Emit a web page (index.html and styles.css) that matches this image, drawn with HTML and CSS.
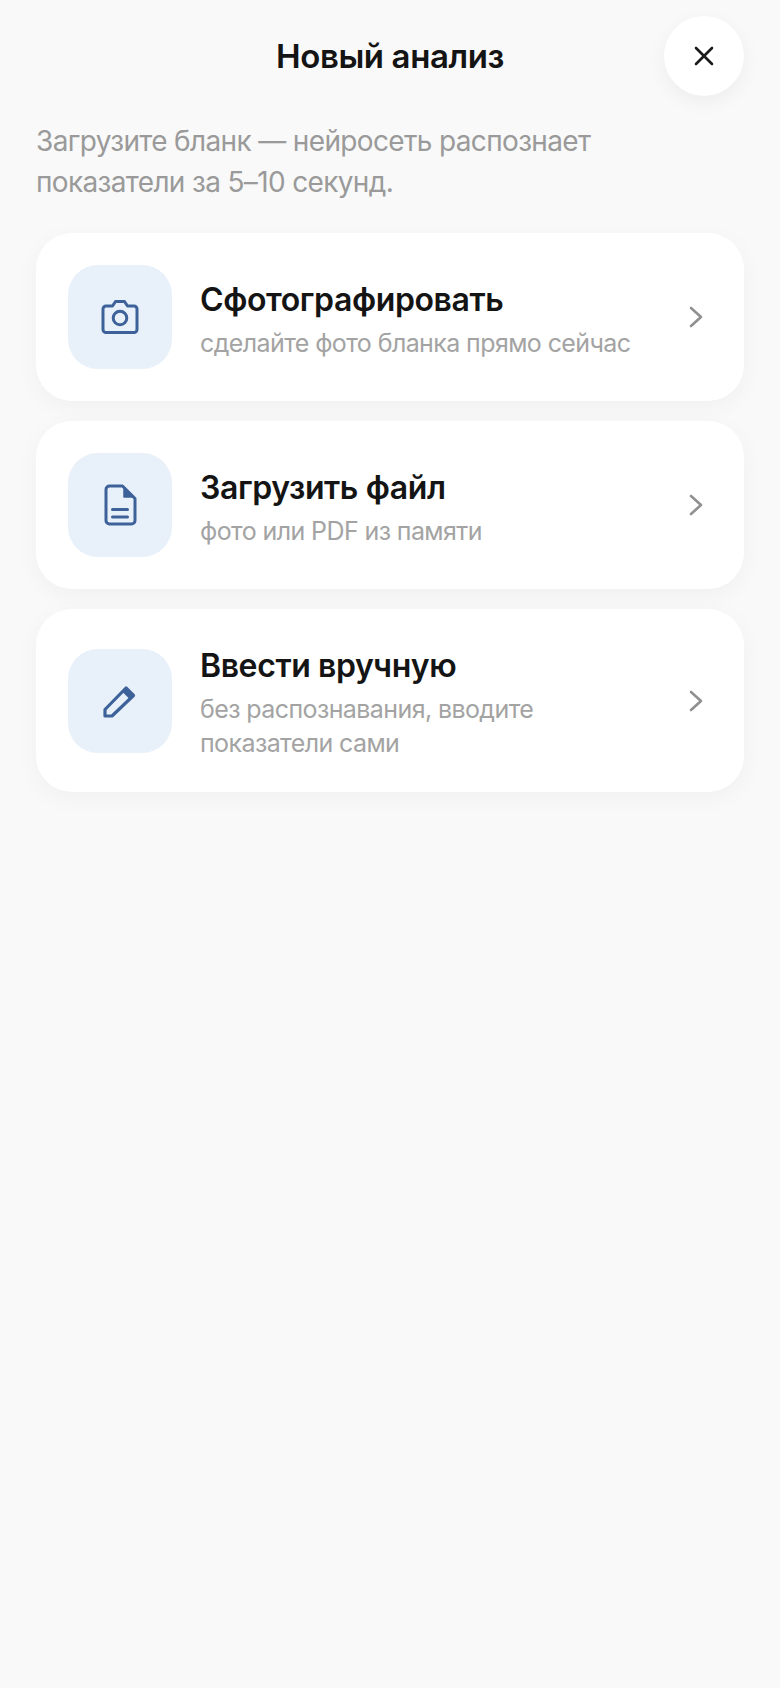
FILE: index.html
```html
<!DOCTYPE html>
<html lang="ru">
<head>
  <meta charset="UTF-8">
  <title>Новый анализ</title>
  <link rel="stylesheet" href="styles.css">
</head>
<body>

  <!-- Header -->
  <header class="top">
    <h1>Новый анализ</h1>
    <button class="close" aria-label="Закрыть">
      <svg width="24" height="24" viewBox="0 0 24 24" fill="none" stroke="#1a1a1a" stroke-width="2.6" stroke-linecap="round">
        <path d="M4 4l16 16M20 4L4 20"/>
      </svg>
    </button>
  </header>

  <p class="intro">Загрузите бланк — нейросеть распознает показатели за 5–10 секунд.</p>

  <!-- Options -->
  <section class="options">
    <div class="card">
      <div class="card-icon">
        <svg width="40" height="40" viewBox="0 0 40 40" fill="none" stroke="#3d6299" stroke-width="3" stroke-linejoin="round">
          <path d="M6 9h6.500l3-4.500h9l3 4.500h6.500a3 3 0 0 1 3 3v20.500a3 3 0 0 1-3 3h-28a3 3 0 0 1-3-3v-20.500a3 3 0 0 1 3-3z"/>
          <circle cx="20" cy="21" r="6.800"/>
        </svg>
      </div>
      <div class="card-text">
        <h3>Сфотографировать</h3>
        <p>сделайте фото бланка прямо сейчас</p>
      </div>
      <svg class="chevron" width="20" height="28" viewBox="0 0 20 28" fill="none" stroke="#909090" stroke-width="2.600" stroke-linecap="round" stroke-linejoin="round">
        <path d="M5 5l10 9-10 9"/>
      </svg>
    </div>

    <div class="card">
      <div class="card-icon">
        <svg width="40" height="42" viewBox="0 0 40 42" fill="none" stroke="#3d6299" stroke-width="3" stroke-linecap="round" stroke-linejoin="round">
          <path d="M9.500 2h13l12.500 12.500v22a3.500 3.500 0 0 1-3.500 3.500h-22a3.500 3.500 0 0 1-3.500-3.500v-31a3.500 3.500 0 0 1 3.500-3.500z"/>
          <path d="M24 3.500v9.500h9.500z" fill="#3d6299" stroke-width="1.500"/>
          <path d="M12.500 25.500h15M12.500 33h15"/>
        </svg>
      </div>
      <div class="card-text">
        <h3>Загрузить файл</h3>
        <p>фото или PDF из памяти</p>
      </div>
      <svg class="chevron" width="20" height="28" viewBox="0 0 20 28" fill="none" stroke="#909090" stroke-width="2.600" stroke-linecap="round" stroke-linejoin="round">
        <path d="M5 5l10 9-10 9"/>
      </svg>
    </div>

    <div class="card">
      <div class="card-icon">
        <svg width="40" height="40" viewBox="0 0 40 40" fill="none" stroke="#3d6299" stroke-width="3.200" stroke-linejoin="round">
          <path d="M5 35v-6.500L26 7l7.500 7.500L12 35z"/>
          <path d="M24.500 9.500l7.500 7.500" stroke-width="5"/>
        </svg>
      </div>
      <div class="card-text">
        <h3>Ввести вручную</h3>
        <p>без распознавания, вводите показатели сами</p>
      </div>
      <svg class="chevron" width="20" height="28" viewBox="0 0 20 28" fill="none" stroke="#909090" stroke-width="2.600" stroke-linecap="round" stroke-linejoin="round">
        <path d="M5 5l10 9-10 9"/>
      </svg>
    </div>
  </section>

</body>
</html>
```

FILE: styles.css
```css
* {
  margin: 0;
  padding: 0;
  box-sizing: border-box;
}

body {
  font-family: Inter, 'Noto Sans', sans-serif;
  background: #f9f9f9;
  color: #141414;
  min-height: 100vh;
}

.top {
  position: relative;
  height: 80px;
  margin: 16px 36px 0;
  display: flex;
  align-items: center;
  justify-content: center;
}

.top h1 {
  font-size: 33px;
  font-weight: 600;
  letter-spacing: -0.4px;
}

.close {
  position: absolute;
  top: 0;
  right: 0;
  width: 80px;
  height: 80px;
  border: none;
  border-radius: 50%;
  background: #fff;
  box-shadow: 0 6px 20px rgba(0, 0, 0, 0.05);
  display: flex;
  align-items: center;
  justify-content: center;
}

.intro {
  margin: 25px 36px 0;
  font-size: 28px;
  line-height: 41px;
  color: #9a9a9a;
  letter-spacing: -0.65px;
}

.options {
  margin: 30px 36px 0;
  display: flex;
  flex-direction: column;
  gap: 20px;
}

.card {
  display: flex;
  align-items: center;
  gap: 28px;
  padding: 32px;
  background: #fff;
  border-radius: 36px;
  box-shadow: 0 6px 24px rgba(0, 0, 0, 0.04);
}

.card-icon {
  flex: none;
  width: 104px;
  height: 104px;
  border-radius: 30px;
  background: #e8f0fa;
  display: flex;
  align-items: center;
  justify-content: center;
}

.card-text {
  flex: 1;
  padding-top: 2px;
}

.card-text h3 {
  font-size: 32px;
  font-weight: 600;
  line-height: 46px;
  letter-spacing: -0.4px;
}

.card-text p {
  margin-top: 3px;
  font-size: 25px;
  line-height: 34px;
  color: #a3a3a3;
  letter-spacing: -0.6px;
}

.chevron {
  flex: none;
  margin-right: 6px;
}
```
